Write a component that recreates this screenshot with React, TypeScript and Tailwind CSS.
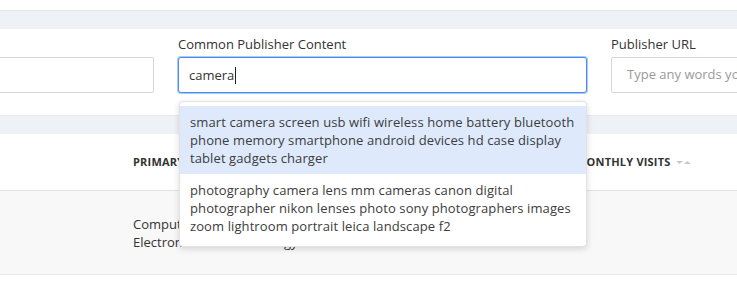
import React from 'react';

const suggestions = [
  'smart camera screen usb wifi wireless home battery bluetooth phone memory smartphone android devices hd case display tablet gadgets charger',
  'photography camera lens mm cameras canon digital photographer nikon lenses photo sony photographers images zoom lightroom portrait leica landscape f2',
];

const SortIcon = () => (
  <svg width="16" height="6" viewBox="0 0 16 6" className="ml-[5px]">
    <polygon points="0,2 7,2 3.5,5" fill="#c8c8c8" />
    <polygon points="8,5 15,5 11.5,2" fill="#c8c8c8" />
  </svg>
);

const App: React.FC = () => {
  return (
    <div className="w-[737px] h-[305px] overflow-hidden bg-white font-['Open_Sans',sans-serif] text-[13px] text-[#333]">
      <div className="h-[10px]" />
      <div className="h-[19px] border-t border-[#e4e7eb] bg-[#eef1f5]" />

      {/* filters */}
      <div className="h-[86px] pt-[6px]">
        <div className="ml-[-255px] flex gap-[24px]">
          <div className="w-[409px] shrink-0">
            <div className="h-[18px] leading-[18px] mb-[4px]">Category</div>
            <div className="h-[36px] rounded-[2px] border border-[#d6d6d6] bg-white" />
          </div>

          <div className="relative w-[409px] shrink-0">
            <div className="h-[18px] leading-[18px] mb-[4px]">Common Publisher Content</div>
            <div className="flex h-[36px] items-center rounded-[3px] border border-[#4a8ff0] bg-white px-[10px] shadow-[0_0_0_1px_#a9cbf7]">
              <span className="leading-[18px]">camera</span>
              <span className="ml-[1px] h-[17px] w-px bg-[#222]" />
            </div>

            <div className="absolute left-px top-[66px] z-10 w-[408px] rounded-[4px] border border-[#e2e2e2] bg-white py-[4px] shadow-[0_2px_6px_rgba(0,0,0,0.15)]">
              {suggestions.map((s, i) => (
                <div
                  key={i}
                  className={`px-[10px] py-[7px] leading-[18px] tracking-[0.1px] text-[#3c3c3c] ${i === 0 ? 'bg-[#deeafc]' : ''}`}
                >
                  {s}
                </div>
              ))}
            </div>
          </div>

          <div className="w-[409px] shrink-0">
            <div className="h-[18px] leading-[18px] mb-[4px]">Publisher URL</div>
            <div className="flex h-[36px] items-center rounded-[2px] border border-[#d6d6d6] bg-white px-[15px] text-[#9a9a9a]">
              Type any words you want to find
            </div>
          </div>
        </div>
      </div>

      <div className="h-[19px] border-t border-[#e6e9ed] bg-[#eef1f5]" />

      {/* table */}
      <div className="flex h-[57px] items-center border-b border-[#e3e3e3] text-[11px] font-bold uppercase tracking-[0.2px] text-[#333]">
        <div className="w-[576px] shrink-0 pl-[133px]">Primary Category</div>
        <div className="flex items-center">
          Monthly Visits
          <SortIcon />
        </div>
      </div>
      <div className="flex h-[84px] items-center border-b border-[#e8e8e8] bg-[#f8f8f8]">
        <div className="w-[576px] shrink-0 pl-[133px] leading-[18px]">
          Computers
          <br />
          Electronics and Technology
        </div>
      </div>
    </div>
  );
};

export default App;
